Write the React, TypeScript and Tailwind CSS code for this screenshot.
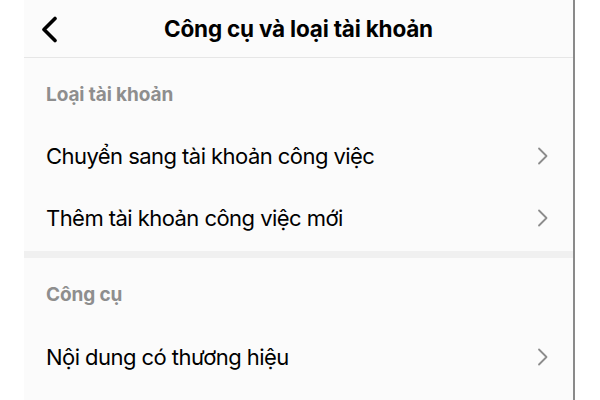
import React from "react";

function ChevronRight() {
  return (
    <svg width="12" height="18" viewBox="0 0 12 18" fill="none">
      <path d="M2 1.5 L9.5 9 L2 16.5" stroke="#8c8c8c" strokeWidth="1.8" strokeLinecap="round" strokeLinejoin="round" />
    </svg>
  );
}

function Row({ label }: { label: string }) {
  return (
    <div className="h-[62px] flex items-center justify-between pl-[22px] pr-[24px]">
      <span className="text-[22px] text-black tracking-[-0.55px]">{label}</span>
      <ChevronRight />
    </div>
  );
}

export default function App() {
  return (
    <div
      className="w-[600px] h-[400px] bg-white flex overflow-hidden"
      style={{ fontFamily: "Inter, 'Noto Sans', sans-serif" }}
    >
      <div className="w-[24px] shrink-0" />
      <div className="w-[549px] shrink-0 bg-[#fbfbfb] flex flex-col">
        <div className="h-[58px] relative flex items-center justify-center border-b border-[#e6e6e6]">
          <svg className="absolute left-[16px] top-[16px]" width="20" height="28" viewBox="0 0 20 28" fill="none">
            <path d="M15 2.5 L4 13.5 L15 24.5" stroke="#000" strokeWidth="3.6" strokeLinecap="round" strokeLinejoin="round" />
          </svg>
          <span className="text-[22.5px] font-bold text-black tracking-[-0.2px] mt-[1px]">Công cụ và loại tài khoản</span>
        </div>
        <div className="h-[67px] flex items-center pl-[22px] pt-[8px]">
          <span className="text-[19px] font-bold text-[#8e8e8e] tracking-[-0.1px]">Loại tài khoản</span>
        </div>
        <Row label="Chuyển sang tài khoản công việc" />
        <Row label="Thêm tài khoản công việc mới" />
        <div className="h-[7px] mt-[2px] bg-[#f0f0f0]" />
        <div className="h-[68px] flex items-center pl-[22px] pt-[7px]">
          <span className="text-[19px] font-bold text-[#8e8e8e] tracking-[-0.1px]">Công cụ</span>
        </div>
        <Row label="Nội dung có thương hiệu" />
      </div>
      <div className="w-[2px] shrink-0 bg-[#8a8a8a]" />
      <div className="flex-1 bg-white" />
    </div>
  );
}
